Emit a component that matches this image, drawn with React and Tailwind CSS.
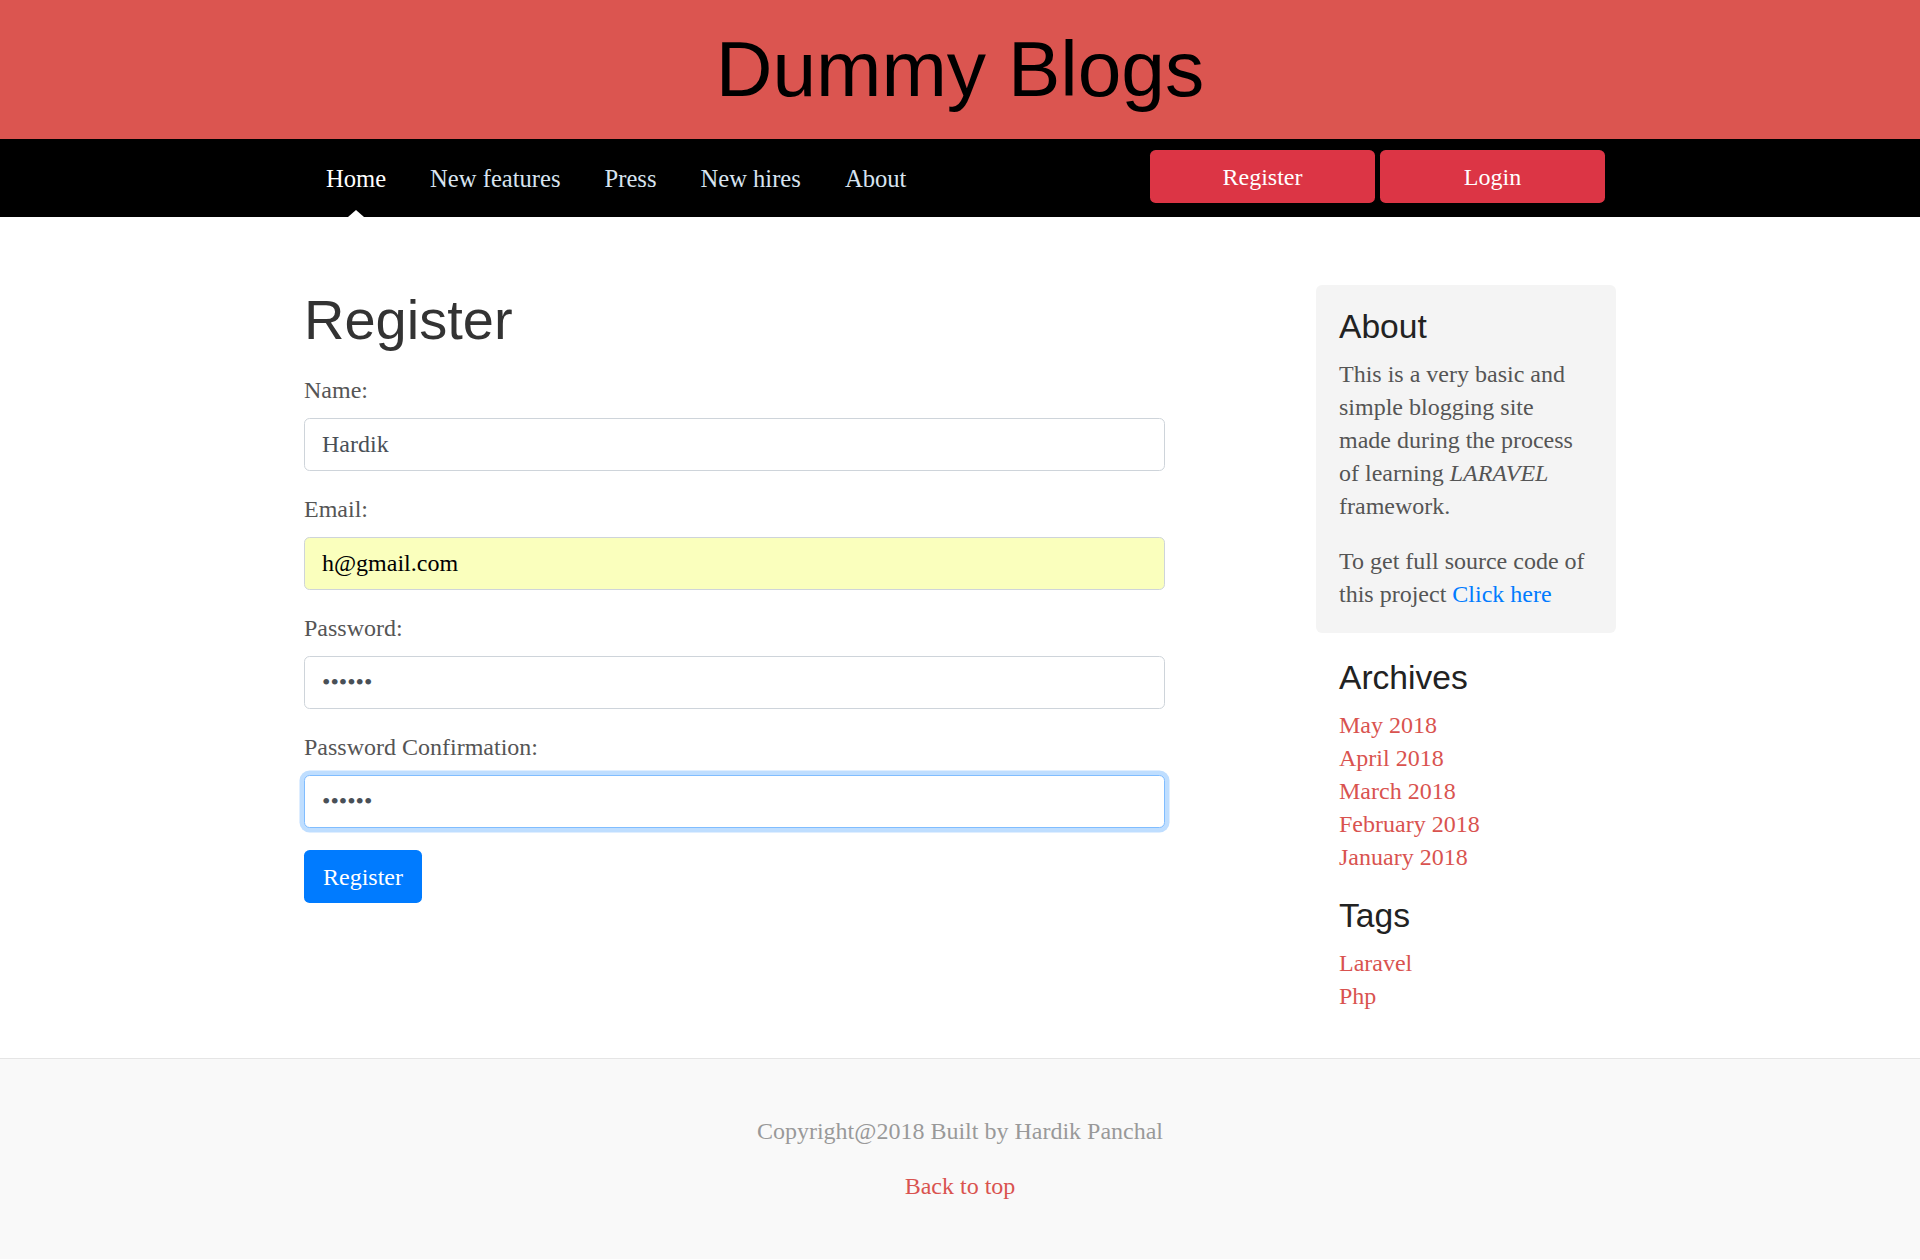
import React from "react";

const serif = { fontFamily: '"Liberation Serif", "Times New Roman", serif' };
const sans = { fontFamily: '"Liberation Sans", Arial, sans-serif' };

function Field({ label, type = "text", value, variant = "normal" }) {
  const base =
    "block w-full h-[53px] rounded-[5.6px] border px-[17px] text-[24px] outline-none";
  let cls = base + " bg-white border-[#ced4da] text-[#495057]";
  if (variant === "autofill") cls = base + " bg-[#faffbd] border-[#ced4da] text-black";
  if (variant === "focus")
    cls = base + " bg-white border-[#80bdff] text-[#495057] shadow-[0_0_0_4.5px_rgba(0,123,255,0.25)]";
  return (
    <div className="mb-[22px]">
      <label className="block mb-[11px] text-[24px] leading-[33px] text-[#555]" style={serif}>
        {label}
      </label>
      <input type={type} defaultValue={value} readOnly className={cls} style={serif} />
    </div>
  );
}

export default function App() {
  const navItems = ["Home", "New features", "Press", "New hires", "About"];
  const archives = ["May 2018", "April 2018", "March 2018", "February 2018", "January 2018"];
  return (
    <div className="min-h-[1260px] bg-white" style={serif}>
      <header className="h-[139px] bg-[#db5550] flex items-center justify-center">
        <h1 className="text-[78.5px] leading-none text-black font-normal" style={sans}>
          Dummy Blogs
        </h1>
      </header>

      <nav className="h-[78px] bg-black">
        <div className="w-[1312px] mx-auto h-full flex items-center justify-between">
          <div className="flex h-full">
            {navItems.map((item, i) => (
              <a
                key={item}
                href="#"
                className={
                  "relative h-full flex items-center px-[22px] text-[24.6px] leading-[33px] " +
                  (i === 0 ? "text-white" : "text-[#d8e4f0]")
                }
              >
                {item}
                {i === 0 && (
                  <span className="absolute bottom-0 left-1/2 -translate-x-1/2 w-0 h-0 border-l-[8px] border-r-[8px] border-b-[7px] border-l-transparent border-r-transparent border-b-white" />
                )}
              </a>
            ))}
          </div>
          <div className="flex gap-[5px] pr-[11px] -mt-[3px]">
            <button className="w-[225px] h-[53px] rounded-[5.6px] bg-[#dc3545] text-white text-[24px]">
              Register
            </button>
            <button className="w-[225px] h-[53px] rounded-[5.6px] bg-[#dc3545] text-white text-[24px]">
              Login
            </button>
          </div>
        </div>
      </nav>

      <main className="w-[1312px] mx-auto flex justify-between pb-[45px]">
        <div className="w-[861px] pt-[69px]">
          <h2 className="text-[56px] leading-[67px] text-[#333] font-normal mb-[21px]" style={sans}>
            Register
          </h2>
          <Field label="Name:" value="Hardik" />
          <Field label="Email:" value="h@gmail.com" variant="autofill" />
          <Field label="Password:" type="password" value="secret" />
          <Field label="Password Confirmation:" type="password" value="secret" variant="focus" />
          <button className="h-[53px] px-[19px] rounded-[5.6px] bg-[#007bff] text-white text-[24px]">
            Register
          </button>
        </div>

        <aside className="w-[300px] pt-[68px]">
          <div className="bg-[#f4f4f4] rounded-[6px] px-[23px] py-[22px]">
            <h4 className="text-[33.6px] leading-[40px] text-[#222] font-normal mb-[11px]" style={sans}>
              About
            </h4>
            <div className="w-[250px] text-[24px] leading-[33px] text-[#555]">
              <p className="mb-[22px]">
                This is a very basic and simple blogging site made during the process of learning{" "}
                <em>LARAVEL</em> framework.
              </p>
              <p>
                To get full source code of this project{" "}
                <a href="#" className="text-[#007bff]">
                  Click here
                </a>
              </p>
            </div>
          </div>

          <div className="px-[23px] pt-[25px]">
            <h4 className="text-[33.6px] leading-[40px] text-[#222] font-normal mb-[11px]" style={sans}>
              Archives
            </h4>
            <ol className="text-[24px] leading-[33px]">
              {archives.map((a) => (
                <li key={a}>
                  <a href="#" className="text-[#d9534f]">
                    {a}
                  </a>
                </li>
              ))}
            </ol>
            <h4 className="mt-[22px] text-[33.6px] leading-[40px] text-[#222] font-normal mb-[11px]" style={sans}>
              Tags
            </h4>
            <ol className="text-[24px] leading-[33px]">
              <li>
                <a href="#" className="text-[#d9534f]">Laravel</a>
              </li>
              <li>
                <a href="#" className="text-[#d9534f]">Php</a>
              </li>
            </ol>
          </div>
        </aside>
      </main>

      <footer className="bg-[#f9f9f9] border-t border-[#e5e5e5] py-[56px] text-center text-[24px] leading-[33px]">
        <p className="mb-[22px] text-[#999]">Copyright@2018 Built by Hardik Panchal</p>
        <p>
          <a href="#" className="text-[#d9534f]">Back to top</a>
        </p>
      </footer>
    </div>
  );
}
